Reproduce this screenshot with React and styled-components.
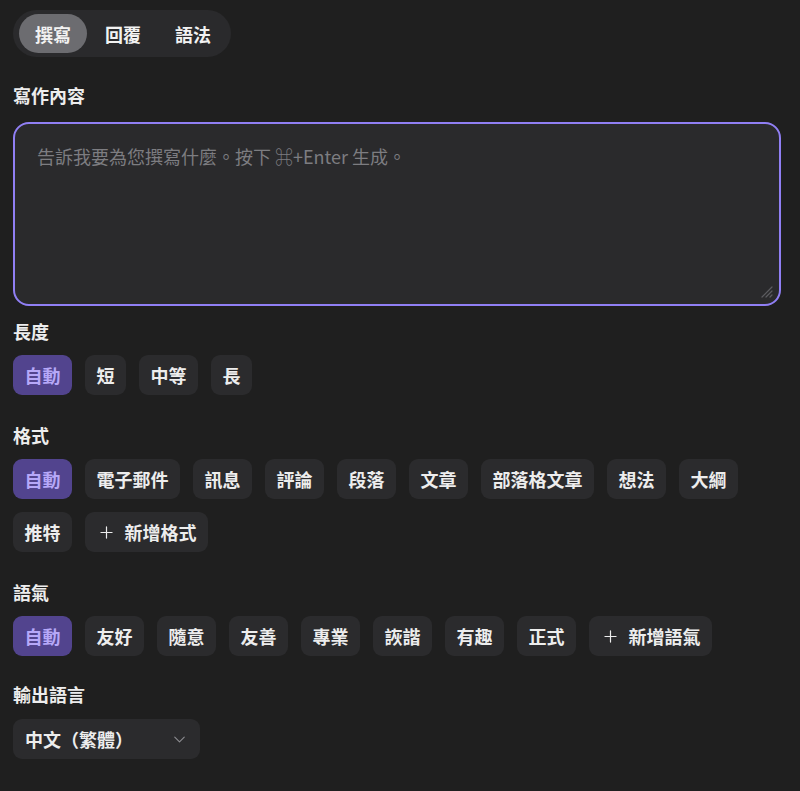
import { useState } from "react";
import styled, { createGlobalStyle } from "styled-components";
import { Plus, ChevronDown } from "lucide-react";

const GlobalStyle = createGlobalStyle`
    html, body {
        margin: 0;
        background: #1f1f1f;
        color-scheme: dark;
    }
    body {
        font-family: "Noto Sans CJK TC", "Noto Sans", sans-serif;
        color: #ececec;
    }
`

const lengths = ["自動", "短", "中等", "長"]
const formats = ["自動", "電子郵件", "訊息", "評論", "段落", "文章", "部落格文章", "想法", "大綱", "推特"]
const tones = ["自動", "友好", "隨意", "友善", "專業", "詼諧", "有趣", "正式"]

const App = () => {
    const [tab, setTab] = useState("撰寫")
    const [length, setLength] = useState("自動")
    const [format, setFormat] = useState("自動")
    const [tone, setTone] = useState("自動")

    return (
        <Page>
            <GlobalStyle />
            <TabGroup>
                {["撰寫", "回覆", "語法"].map(t => (
                    <Tab key={t} $active={tab === t} onClick={() => setTab(t)}>{t}</Tab>
                ))}
            </TabGroup>

            <Section $top={26} $gap={15}>
                <Label>寫作內容</Label>
                <PromptBox>
                    <Prompt placeholder="告訴我要為您撰寫什麼。按下 ⌘+Enter 生成。" />
                    <Grabber width="14" height="14" viewBox="0 0 14 14">
                        <path d="M13 3 L3 13 M13 7 L7 13 M13 11 L11 13" stroke="#5c5c60" strokeWidth="1.2" strokeLinecap="round" />
                    </Grabber>
                </PromptBox>
            </Section>

            <Section $top={13}>
                <Label>長度</Label>
                <ChipRow>
                    {lengths.map(l => (
                        <Chip key={l} $active={length === l} onClick={() => setLength(l)}>{l}</Chip>
                    ))}
                </ChipRow>
            </Section>

            <Section $top={28}>
                <Label>格式</Label>
                <ChipRow>
                    {formats.map(f => (
                        <Chip key={f} $active={format === f} onClick={() => setFormat(f)}>{f}</Chip>
                    ))}
                    <Chip><Plus size={19} strokeWidth={1.5} />新增格式</Chip>
                </ChipRow>
            </Section>

            <Section $top={28}>
                <Label>語氣</Label>
                <ChipRow>
                    {tones.map(t => (
                        <Chip key={t} $active={tone === t} onClick={() => setTone(t)}>{t}</Chip>
                    ))}
                    <Chip><Plus size={19} strokeWidth={1.5} />新增語氣</Chip>
                </ChipRow>
            </Section>

            <Section $top={26} $gap={13}>
                <Label>輸出語言</Label>
                <Select>
                    中文（繁體）
                    <ChevronDown size={19} strokeWidth={1.4} color="#8c8c90" />
                </Select>
            </Section>
        </Page>
    )
}

export default App;

const Page = styled.div`
    padding: 10px 19px 30px 13px;
    display: flex;
    flex-direction: column;
    align-items: flex-start;
`

const TabGroup = styled.div`
    display: flex;
    gap: 2px;
    padding: 4px 4px 4px 6px;
    border-radius: 24px;
    background: #2a2a2c;
`

const Tab = styled.button`
    height: 39px;
    width: 68px;
    border: none;
    border-radius: 20px;
    font-family: inherit;
    font-size: 18px;
    font-weight: 700;
    color: #f2f2f2;
    background: ${p => p.$active ? "#6c6c70" : "transparent"};
    cursor: pointer;
    padding: 0;
`

const Section = styled.section`
    align-self: stretch;
    display: flex;
    flex-direction: column;
    align-items: flex-start;
    gap: ${p => p.$gap ?? 12}px;
    margin-top: ${p => p.$top}px;
`

const Label = styled.div`
    font-size: 18px;
    line-height: 24px;
    font-weight: 700;
    color: #ededed;
`

const PromptBox = styled.div`
    position: relative;
    align-self: stretch;
    display: flex;
`

const Prompt = styled.textarea`
    box-sizing: border-box;
    flex: 1;
    height: 184px;
    padding: 19px 22px;
    border: 2px solid #907ff4;
    border-radius: 16px;
    background: #2a2a2c;
    color: #ececec;
    font-family: inherit;
    font-size: 18px;
    line-height: 26px;
    outline: none;
    resize: none;

    &::placeholder {
        color: #7d7d81;
    }
`

const Grabber = styled.svg`
    position: absolute;
    right: 8px;
    bottom: 8px;
    pointer-events: none;
`

const ChipRow = styled.div`
    display: flex;
    flex-wrap: wrap;
    gap: 13px;
`

const Chip = styled.button`
    display: flex;
    align-items: center;
    gap: 9px;
    height: 40px;
    padding: 0 11.5px;
    border: none;
    border-radius: 9px;
    font-family: inherit;
    font-size: 18px;
    font-weight: 700;
    color: ${p => p.$active ? "#b6a8f8" : "#ededed"};
    background: ${p => p.$active ? "#52448e" : "#2b2b2d"};
    cursor: pointer;
`

const Select = styled.div`
    box-sizing: border-box;
    width: 187px;
    height: 40px;
    display: flex;
    align-items: center;
    justify-content: space-between;
    padding: 0 11px 0 12px;
    border-radius: 9px;
    background: #2b2b2d;
    font-size: 18px;
    font-weight: 700;
    color: #ededed;
`
